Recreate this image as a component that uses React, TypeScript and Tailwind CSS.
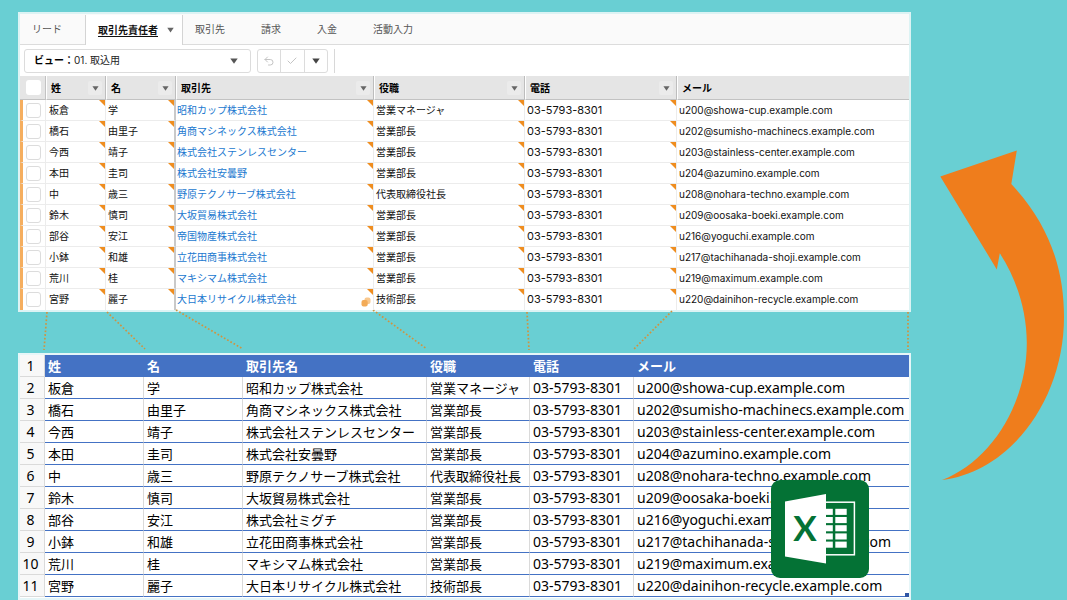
import { Check, Undo2 } from "lucide-react";
import { useState } from "react";

type Contact = {
  lastName: string;
  firstName: string;
  account: string;
  //the sheet still has the old account name for one of the rows
  sheetAccount?: string;
  title: string;
  phone: string;
  email: string;
};

const contacts: Contact[] = [
  { lastName: "板倉", firstName: "学", account: "昭和カップ株式会社", title: "営業マネージャ", phone: "03-5793-8301", email: "u200@showa-cup.example.com" },
  { lastName: "橋石", firstName: "由里子", account: "角商マシネックス株式会社", title: "営業部長", phone: "03-5793-8301", email: "u202@sumisho-machinecs.example.com" },
  { lastName: "今西", firstName: "靖子", account: "株式会社ステンレスセンター", title: "営業部長", phone: "03-5793-8301", email: "u203@stainless-center.example.com" },
  { lastName: "本田", firstName: "圭司", account: "株式会社安曇野", title: "営業部長", phone: "03-5793-8301", email: "u204@azumino.example.com" },
  { lastName: "中", firstName: "歳三", account: "野原テクノサーブ株式会社", title: "代表取締役社長", phone: "03-5793-8301", email: "u208@nohara-techno.example.com" },
  { lastName: "鈴木", firstName: "慎司", account: "大坂貿易株式会社", title: "営業部長", phone: "03-5793-8301", email: "u209@oosaka-boeki.example.com" },
  { lastName: "部谷", firstName: "安江", account: "帝国物産株式会社", sheetAccount: "株式会社ミグチ", title: "営業部長", phone: "03-5793-8301", email: "u216@yoguchi.example.com" },
  { lastName: "小鉢", firstName: "和雄", account: "立花田商事株式会社", title: "営業部長", phone: "03-5793-8301", email: "u217@tachihanada-shoji.example.com" },
  { lastName: "荒川", firstName: "桂", account: "マキシマム株式会社", title: "営業部長", phone: "03-5793-8301", email: "u219@maximum.example.com" },
  { lastName: "宮野", firstName: "麗子", account: "大日本リサイクル株式会社", title: "技術部長", phone: "03-5793-8301", email: "u220@dainihon-recycle.example.com" },
];

const gridHeaders = ["姓", "名", "取引先", "役職", "電話", "メール"];
const sheetHeaders = ["姓", "名", "取引先名", "役職", "電話", "メール"];

function Caret({ className }: { className: string }) {
  return (
    <svg viewBox="0 0 8 6" className={className} aria-hidden="true">
      <path d="M0.3 0.4h7.4L4 5.8z" fill="currentColor" />
    </svg>
  );
}

//the orange corner that marks an edited cell
function EditedMark() {
  return (
    <svg viewBox="0 0 6 6" className="absolute top-0 right-0 size-[6px]" aria-hidden="true">
      <path d="M0 0h6v6z" fill="#ef8d1f" />
    </svg>
  );
}

function TabBar() {
  const otherTabs = ["取引先", "請求", "入金", "活動入力"];

  return (
    <nav className="flex h-[31px] border-b border-[#dcdcdc] bg-[#fafafa] pt-px text-[10px] text-[#555]">
      <button type="button" className="w-[65px] pl-3 text-left">
        リード
      </button>
      <button
        type="button"
        className="-mb-px flex w-[98px] items-center justify-between border-x border-[#d4d4d4] bg-white pr-2 pl-3 font-bold text-[#111]"
      >
        <span className="underline underline-offset-2">取引先責任者</span>
        <Caret className="h-[6px] w-[7px] text-[#666]" />
      </button>
      <div className="flex gap-9 pl-3">
        {otherTabs.map((tab) => (
          <button type="button" key={tab}>
            {tab}
          </button>
        ))}
      </div>
    </nav>
  );
}

function Toolbar() {
  return (
    <div className="flex h-[31px] items-center bg-white pl-1 text-[10px] text-[#222]">
      <div className="relative flex h-6 w-[227px] items-center rounded-[3px] border border-[#dcdcdc] pl-[9px]">
        <label htmlFor="view" className="font-bold text-black">
          ビュー：
        </label>
        <select id="view" className="h-full flex-1 appearance-none bg-transparent outline-none">
          <option>01. 取込用</option>
        </select>
        <Caret className="pointer-events-none absolute right-3 h-[6px] w-[8px] text-[#555]" />
      </div>
      <div className="ml-[6px] flex h-6 w-[71px] divide-x divide-[#dcdcdc] rounded-[3px] border border-[#dcdcdc] text-[#c4c4c4]">
        <button type="button" aria-label="元に戻す" className="flex flex-1 items-center justify-center">
          <Undo2 size={12} strokeWidth={2} />
        </button>
        <button type="button" aria-label="保存" className="flex flex-1 items-center justify-center">
          <Check size={12} strokeWidth={2} />
        </button>
        <button type="button" aria-label="その他" className="flex flex-1 items-center justify-center">
          <Caret className="h-[6px] w-[8px] text-[#444]" />
        </button>
      </div>
      <div className="ml-[6px] h-6 w-px bg-[#d8d8d8]" />
    </div>
  );
}

function ContactGrid() {
  const [checked, setChecked] = useState<string[]>([]);

  const toggle = (email: string) => {
    setChecked((prev) =>
      prev.includes(email) ? prev.filter((e) => e !== email) : [...prev, email]
    );
  };

  return (
    <table className="w-full table-fixed border-separate border-spacing-0 text-left text-[10px] whitespace-nowrap text-[#111]">
      <colgroup>
        <col className="w-[26px]" />
        <col className="w-[60px]" />
        <col className="w-[70px]" />
        <col className="w-[198px]" />
        <col className="w-[151px]" />
        <col className="w-[152px]" />
        <col />
      </colgroup>
      <thead>
        <tr className="h-6 bg-[#e5e5e5]">
          <th className="border-r border-b border-[#c2c2c2] p-0 pl-[6px]">
            <input
              type="checkbox"
              aria-label="すべて選択"
              className="block size-[15px] appearance-none rounded-[3px] bg-white"
            />
          </th>
          {gridHeaders.map((header, i) => (
            <th
              key={header}
              className="border-r border-b border-l border-r-[#bdbdbd] border-b-[#c2c2c2] border-l-white p-0 pt-px pr-[3px] pl-1 font-bold text-black last:border-r-0"
            >
              <div className="flex items-center justify-between">
                {header}
                {i < 5 && (
                  <button
                    type="button"
                    aria-label={`${header}のメニュー`}
                    className="flex size-[14px] items-center justify-center rounded-[2px] bg-[#ebebeb]"
                  >
                    <Caret className="h-[5px] w-[7px] text-[#666]" />
                  </button>
                )}
              </div>
            </th>
          ))}
        </tr>
      </thead>
      <tbody>
        {contacts.map((contact, i) => (
          <tr key={contact.email} className="h-[21px] bg-white *:border-b *:border-b-[#ececec] last:*:border-b-0">
            <td className="border-r border-l-3 border-r-[#ececec] border-l-[#f5ae5f] p-0 pl-[3px]">
              <input
                type="checkbox"
                aria-label={`${contact.lastName}を選択`}
                checked={checked.includes(contact.email)}
                onChange={() => toggle(contact.email)}
                className="block size-[15px] appearance-none rounded-[3px] border border-[#dcdcdc] bg-white checked:bg-[#f5ae5f]"
              />
            </td>
            <td className="relative border-r border-r-[#ececec] p-0 pl-[3px]">
              {contact.lastName}
              <EditedMark />
            </td>
            <td className="relative border-r-2 border-r-[#c9c9c9] p-0 pl-[2px]">
              {contact.firstName}
              <EditedMark />
            </td>
            <td className="relative border-r border-r-[#ececec] p-0 pl-px">
              <a href="#" className="text-[#1a78cf]">
                {contact.account}
              </a>
              <EditedMark />
              {i === contacts.length - 1 && (
                <svg viewBox="0 0 10 10" className="absolute right-[2px] bottom-[3px] size-[10px]" aria-hidden="true">
                  <rect x="3.5" y="0.5" width="6" height="6.5" rx="2" fill="#f9c88e" />
                  <rect x="0.5" y="3" width="6.2" height="6.5" rx="2" fill="#f3ab57" />
                </svg>
              )}
            </td>
            <td className="relative border-r border-r-[#ececec] p-0 pl-[2px]">
              {contact.title}
              <EditedMark />
            </td>
            <td className="relative border-r border-r-[#ececec] p-0 pl-[2px] text-[11px]">
              {contact.phone}
              <EditedMark />
            </td>
            <td className="p-0 pl-[2px]">{contact.email}</td>
          </tr>
        ))}
      </tbody>
    </table>
  );
}

//dotted lines that lead each grid column to its sheet column
function Connectors() {
  const lines = [
    [29, 0, 26, 38],
    [89, 0, 127, 37],
    [158, -2, 225, 37],
    [355, -2, 409, 37],
    [509, 0, 511, 38],
    [654, -1, 616, 37],
    [890, 0, 890, 38],
  ];

  return (
    <svg width="893" height="41" className="block overflow-visible" aria-hidden="true">
      {lines.map(([x1, y1, x2, y2]) => (
        <line
          key={x1}
          x1={x1}
          y1={y1}
          x2={x2}
          y2={y2}
          stroke="#cf9440"
          strokeWidth="1.7"
          strokeDasharray="1.7 2"
        />
      ))}
    </svg>
  );
}

const cellStyle = "border-r border-b border-r-[#dadada] border-b-[#4472c4] p-0 pl-[3px]";

function Sheet() {
  return (
    <table className="w-full table-fixed border-separate border-spacing-0 bg-white text-left text-[13px] leading-5 whitespace-nowrap text-black">
      <colgroup>
        <col className="w-[25px]" />
        <col className="w-[99px]" />
        <col className="w-[99px]" />
        <col className="w-[184px]" />
        <col className="w-[103px]" />
        <col className="w-[104px]" />
        <col />
      </colgroup>
      <thead>
        <tr className="h-[22px]">
          <th className="border-r border-b border-[#dadada] bg-[#f8f8f8] p-0 pr-[3px] text-center text-[14px] font-normal">1</th>
          {sheetHeaders.map((header) => (
            <th key={header} className="bg-[#4472c4] p-0 pl-[3px] font-bold text-white">
              {header}
            </th>
          ))}
        </tr>
      </thead>
      <tbody>
        {contacts.map((contact, i) => (
          <tr key={contact.email} className="h-[22px]">
            <th className="border-r border-b border-[#dadada] bg-[#f8f8f8] p-0 pr-[3px] text-center text-[14px] font-normal">{i + 2}</th>
            <td className={cellStyle}>{contact.lastName}</td>
            <td className={cellStyle}>{contact.firstName}</td>
            <td className={cellStyle}>{contact.sheetAccount ?? contact.account}</td>
            <td className={cellStyle}>{contact.title}</td>
            <td className={`${cellStyle} text-[14px]`}>{contact.phone}</td>
            <td className="border-b border-b-[#4472c4] p-0 pl-[3px] text-[14px]">{contact.email}</td>
          </tr>
        ))}
      </tbody>
    </table>
  );
}

function ExcelLogo() {
  return (
    <svg viewBox="0 0 98 98" className="absolute right-10 bottom-5 size-[98px]" role="img" aria-label="Excel">
      <rect width="98" height="98" rx="9" fill="#047235" />
      <rect x="50" y="22.2" width="33.4" height="52.6" fill="none" stroke="#fff" strokeWidth="1.5" />
      <g fill="#fff">
        {[28.8, 37, 45.2, 53.4, 61.6].map((y) => (
          <g key={y}>
            <rect x="50" y={y} width="11.8" height="6.1" />
            <rect x="64.3" y={y} width="11.4" height="6.1" />
          </g>
        ))}
      </g>
      <path d="M14 21.5 55 14v69.6L14 76.4z" fill="#fff" />
      <text
        x="34"
        y="61"
        textAnchor="middle"
        fontSize="35"
        fontWeight="700"
        fill="#047235"
        fontFamily="Lato, sans-serif"
      >
        X
      </text>
    </svg>
  );
}

function ImportArrow() {
  return (
    <svg width="126" height="332" viewBox="940 149 126 332" aria-hidden="true">
      <path
        d="M940.3 176.4 1016.8 150.6 1011.3 184C1050 225 1064 270 1064 317C1064 400 1010 472 942 480C990 462 1026.8 405 1026.8 343C1026.8 310 1016 278 999.8 253.3L996.8 269.4Z"
        fill="#ef7d1c"
      />
    </svg>
  );
}

function App() {
  return (
    <div className="flex min-h-screen bg-[#69cfd3]">
      <main className="flex-1 pt-3 pl-[18px]">
        <section className="border-2 border-[#dcf3f4] bg-white font-[Inter,'Noto_Sans_CJK_JP',sans-serif]">
          <TabBar />
          <Toolbar />
          <ContactGrid />
        </section>
        <Connectors />
        <section className="relative border-2 border-[#e6f6f8] bg-white pb-px font-['Noto_Sans','Noto_Sans_CJK_JP',sans-serif]">
          <Sheet />
          <div className="absolute right-0 bottom-px size-1 bg-[#2f55a4]" />
          <ExcelLogo />
        </section>
      </main>
      <aside className="flex w-[156px] justify-end pt-[149px] pr-px">
        <ImportArrow />
      </aside>
    </div>
  );
}

export default App;
